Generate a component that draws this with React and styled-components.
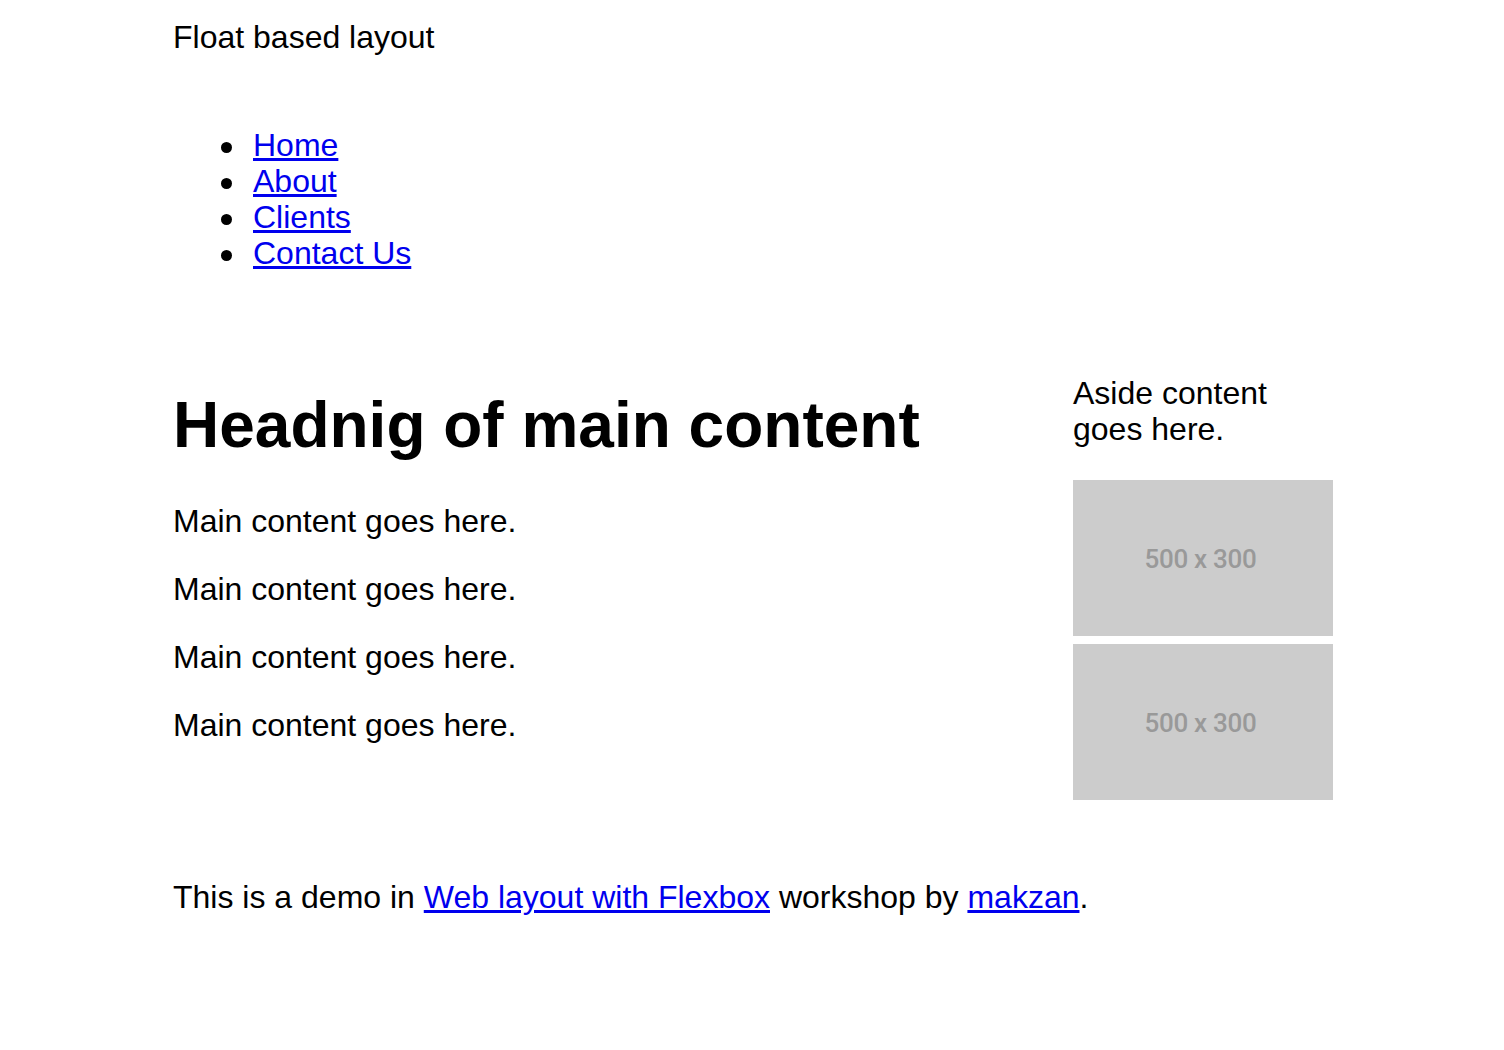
import React from "react";
import styled, { createGlobalStyle } from "styled-components";

const GlobalStyle = createGlobalStyle`
  body {
    margin: 0;
    background: #fff;
    color: #000;
    font-family: "Liberation Sans", Arial, Helvetica, sans-serif;
  }
`;

const Page = styled.div`
  width: 1160px;
  margin: 0 auto;
  padding-left: 2px;
  font-size: 32px;
  line-height: 36px;
`;

const Header = styled.header`
  padding-top: 19px;
`;

const SiteTitle = styled.div`
  height: 36px;
`;

const NavList = styled.ul`
  margin: 72px 0 0;
  padding-left: 80px;
  list-style: none;
`;

const NavItem = styled.li`
  position: relative;
  line-height: 36px;
  &::before {
    content: "";
    position: absolute;
    left: -32px;
    top: 15px;
    width: 11px;
    height: 11px;
    border-radius: 50%;
    background: #000;
  }
`;

const A = styled.a`
  color: #0000ee;
  text-decoration: underline;
`;

const Content = styled.div`
  display: flex;
  align-items: flex-start;
  margin-top: 72px;
`;

const Main = styled.main`
  flex: 1;
`;

const Heading = styled.h1`
  margin: 45px 0 41px;
  font-size: 64px;
  line-height: 74px;
  font-weight: bold;
`;

const Para = styled.p`
  margin: 0 0 32px;
`;

const Aside = styled.aside`
  width: 260px;
  padding-top: 32px;
`;

const AsideText = styled.p`
  margin: 0 0 33px;
`;

const Placeholder = styled.div`
  width: 260px;
  height: 156px;
  padding: 2px 5px 0 0;
  box-sizing: border-box;
  background: #cccccc;
  color: #999999;
  display: flex;
  align-items: center;
  justify-content: center;
  font-family: Roboto, "DejaVu Sans Condensed", sans-serif;
  font-weight: 500;
  font-size: 26px;
  letter-spacing: -0.3px;
  line-height: 1;
  & + & {
    margin-top: 8px;
  }
`;

const Footer = styled.footer`
  margin-top: 79px;
  padding-bottom: 120px;
`;

const links = ["Home", "About", "Clients", "Contact Us"];

const App = () => {
  return (
    <>
      <GlobalStyle />
      <Page>
        <Header>
          <SiteTitle>Float based layout</SiteTitle>
          <nav>
            <NavList>
              {links.map((name) => (
                <NavItem key={name}>
                  <A href="#">{name}</A>
                </NavItem>
              ))}
            </NavList>
          </nav>
        </Header>
        <Content>
          <Main>
            <Heading>Headnig of main content</Heading>
            <Para>Main content goes here.</Para>
            <Para>Main content goes here.</Para>
            <Para>Main content goes here.</Para>
            <Para>Main content goes here.</Para>
          </Main>
          <Aside>
            <AsideText>Aside content goes here.</AsideText>
            <Placeholder>500 x 300</Placeholder>
            <Placeholder>500 x 300</Placeholder>
          </Aside>
        </Content>
        <Footer>
          This is a demo in <A href="#">Web layout with Flexbox</A> workshop by{" "}
          <A href="#">makzan</A>.
        </Footer>
      </Page>
    </>
  );
};

export default App;
